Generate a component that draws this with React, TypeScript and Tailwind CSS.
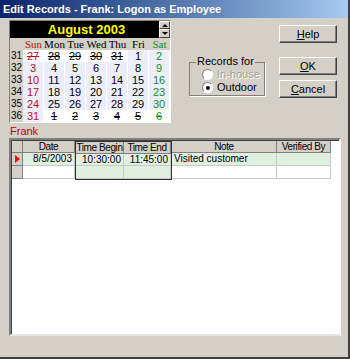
import React from 'react';

const weeks: { wk: number; days: { d: number; cur: boolean }[] }[] = [
  { wk: 31, days: [27, 28, 29, 30, 31].map((d) => ({ d, cur: false })).concat([1, 2].map((d) => ({ d, cur: true }))) },
  { wk: 32, days: [3, 4, 5, 6, 7, 8, 9].map((d) => ({ d, cur: true })) },
  { wk: 33, days: [10, 11, 12, 13, 14, 15, 16].map((d) => ({ d, cur: true })) },
  { wk: 34, days: [17, 18, 19, 20, 21, 22, 23].map((d) => ({ d, cur: true })) },
  { wk: 35, days: [24, 25, 26, 27, 28, 29, 30].map((d) => ({ d, cur: true })) },
  { wk: 36, days: [{ d: 31, cur: true }].concat([1, 2, 3, 4, 5, 6].map((d) => ({ d, cur: false }))) },
];

const dayNames = ['Sun', 'Mon', 'Tue', 'Wed', 'Thu', 'Fri', 'Sat'];

function dayColor(i: number) {
  if (i === 0) return 'text-[#c01010]';
  if (i === 6) return 'text-[#109010]';
  return 'text-black';
}

function Calendar() {
  return (
    <div className="w-[162px] border border-t-[#808080] border-l-[#808080] border-r-white border-b-white bg-[#d4d0c8]">
      <div className="flex h-[17px] bg-black">
        <div className="flex-1 text-center text-[13px] font-bold leading-[17px] text-[#ffff00] pl-[4px]">August 2003</div>
        <div className="flex w-[11px] flex-col">
          <div className="flex h-[8px] items-center justify-center border border-t-white border-l-white border-r-[#404040] border-b-[#404040] bg-[#d4d0c8]">
            <div className="h-0 w-0 border-x-[3px] border-b-[3px] border-x-transparent border-b-black" />
          </div>
          <div className="flex h-[9px] items-center justify-center border border-t-white border-l-white border-r-[#404040] border-b-[#404040] bg-[#d4d0c8]">
            <div className="h-0 w-0 border-x-[3px] border-t-[3px] border-x-transparent border-t-black" />
          </div>
        </div>
      </div>
      <div className="grid h-[12px] grid-cols-[13px_repeat(7,21px)] font-['Liberation_Serif',serif] text-[11px] leading-[12px]">
        <div />
        {dayNames.map((n, i) => (
          <div key={n} className={`text-center ${dayColor(i)}`}>{n}</div>
        ))}
      </div>
      {weeks.map((w) => (
        <div key={w.wk} className="grid h-[12px] grid-cols-[13px_repeat(7,21px)] text-[11px] leading-[12px]">
          <div className="pl-[1px] text-[10px] text-black">{w.wk}</div>
          {w.days.map((c, i) => (
            <div
              key={i}
              className={`border-r border-b border-white text-center ${c.cur ? 'bg-[#eceefb]' : 'bg-white line-through'} ${dayColor(i)}`}
            >
              {c.d}
            </div>
          ))}
        </div>
      ))}
    </div>
  );
}

function Btn({ first, rest }: { first: string; rest: string }) {
  return (
    <div className="flex h-[18px] w-[58px] items-center justify-center border border-t-white border-l-white border-r-[#404040] border-b-[#404040] bg-[#d4d0c8] text-[11px] text-black shadow-[inset_-1px_-1px_#808080]">
      <span className="underline underline-offset-1">{first}</span>
      {rest}
    </div>
  );
}

function Radio({ label, checked, disabled }: { label: string; checked?: boolean; disabled?: boolean }) {
  return (
    <div className="flex h-[13px] items-center gap-[4px]">
      <div className="flex h-[11px] w-[11px] items-center justify-center rounded-full border border-t-[#808080] border-l-[#808080] border-r-white border-b-white bg-white">
        {checked && <div className="h-[4px] w-[4px] rounded-full bg-black" />}
      </div>
      <span className={disabled ? 'text-[#a0a0a0] [text-shadow:1px_1px_#ffffff]' : 'text-black'}>{label}</span>
    </div>
  );
}

const head = 'h-[12px] overflow-hidden whitespace-nowrap border-r border-b border-r-[#808080] border-b-[#808080] bg-[#d4d0c8] text-center text-[10px] leading-[11px] tracking-[-0.4px] text-black';
const row1 = 'h-[13px] overflow-hidden whitespace-nowrap border-r border-b border-[#c8c8c8] bg-[#e0f0e0] text-[10px] leading-[12px] text-black';
const row2 = 'h-[13px] border-r border-b border-[#c8c8c8] bg-white';
const row2g = 'h-[13px] border-r border-b border-[#c8c8c8] bg-[#e0f0e0]';

function Col({ w, title, v, align, green }: { w: string; title: string; v: string; align: string; green?: boolean }) {
  return (
    <div className={`flex flex-col ${w}`}>
      <div className={head}>{title}</div>
      <div className={`${row1} ${align} px-[2px]`}>{v}</div>
      <div className={green ? row2g : row2} />
    </div>
  );
}

export default function App() {
  return (
    <div className="flex h-[359px] w-[350px] flex-col border-r-2 border-b-2 border-r-[#404040] border-b-[#404040] bg-[#d4d0c8] font-['Liberation_Sans',Arial,sans-serif]">
      <div className="h-[18px] shrink-0 bg-gradient-to-r from-[#0a246a] to-[#a6caf0] pl-[3px] text-[11px] font-bold leading-[18px] text-white">
        Edit Records - Frank: Logon as Employee
      </div>
      <div className="flex pl-[9px]">
        <div className="mt-[2px]">
          <Calendar />
        </div>
        <div className="relative ml-[18px] mt-[44px] h-[34px] w-[76px] border border-[#808080] shadow-[1px_1px_#ffffff] text-[11px]">
          <div className="absolute -top-[8px] left-[6px] bg-[#d4d0c8] px-[1px] leading-[13px] text-black">Records for</div>
          <div className="flex flex-col pl-[12px] pt-[5px]">
            <Radio label="In-house" disabled />
            <Radio label="Outdoor" checked />
          </div>
        </div>
        <div className="ml-[14px] mt-[7px] flex flex-col">
          <Btn first="H" rest="elp" />
          <div className="mt-[14px] flex flex-col gap-[5px]">
            <Btn first="O" rest="K" />
            <Btn first="C" rest="ancel" />
          </div>
        </div>
      </div>
      <div className="mt-[2px] h-[13px] pl-[10px] text-[11px] leading-[13px] text-[#c00000]">Frank</div>
      <div className="ml-[9px] h-[198px] w-[332px] border-2 border-t-[#808080] border-l-[#808080] border-r-white border-b-[#e8e6e0]">
        <div className="flex h-full w-full border-t border-l border-[#404040] bg-white">
          <div className="flex w-[11px] flex-col">
            <div className={head} />
            <div className="flex h-[13px] items-center justify-center border-r border-b border-[#808080] bg-[#d4d0c8]">
              <div className="h-0 w-0 border-y-[4px] border-l-[5px] border-y-transparent border-l-[#ff0000]" />
            </div>
            <div className="h-[13px] border-r border-b border-[#808080] bg-[#d4d0c8]" />
          </div>
          <Col w="w-[52px]" title="Date" v="8/5/2003" align="text-right" />
          <div className="flex h-[39px] border border-[#303030]">
            <Col w="w-[48px]" title="Time Begin" v="10:30:00" align="text-right" green />
            <Col w="w-[47px]" title="Time End" v="11:45:00" align="text-right" green />
          </div>
          <Col w="w-[105px]" title="Note" v="Visited customer" align="text-left" />
          <Col w="w-[54px]" title="Verified By" v="" align="text-left" />
        </div>
      </div>
    </div>
  );
}
